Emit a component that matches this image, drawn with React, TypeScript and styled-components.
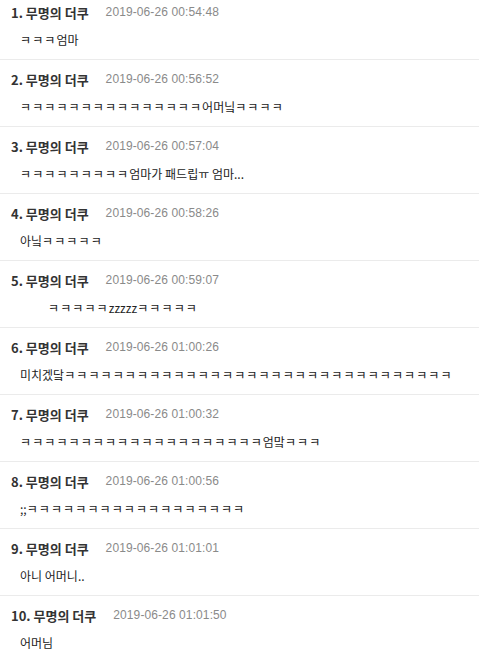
import React, { FunctionComponent } from 'react';
import styled, { createGlobalStyle } from 'styled-components';

const GlobalStyle = createGlobalStyle`
  html, body {
    margin: 0;
    padding: 0;
    background: #fff;
  }
  body {
    font-family: "Noto Sans CJK KR", "Liberation Sans", sans-serif;
    overflow: hidden;
  }
`;

const CommentList = styled.ul`
  list-style: none;
  margin: -7px 0 0 0;
  padding: 0;
  width: 479px;
`;

const CommentItem = styled.li`
  height: 66px;
  box-sizing: content-box;
  border-bottom: 1px solid #ebebeb;
  padding: 0 0 0 11px;
  display: flex;
  flex-direction: column;
`;

const CommentHeader = styled.div`
  display: flex;
  align-items: center;
  gap: 17px;
  height: 20px;
  margin-top: 9px;
`;

const Author = styled.span`
  font-family: "Noto Sans CJK KR", sans-serif;
  font-weight: 700;
  font-size: 13px;
  color: #333;
`;

const Timestamp = styled.span`
  font-family: "Liberation Sans", "DejaVu Sans", sans-serif;
  font-size: 12px;
  letter-spacing: 0.1px;
  color: #8a8a8a;
`;

const CommentBody = styled.p<{ $indent?: number }>`
  margin: 8px 0 0 0;
  padding-left: ${({ $indent }) => 9 + ($indent || 0)}px;
  height: 20px;
  line-height: 20px;
  font-family: "Noto Sans CJK KR", sans-serif;
  font-size: 12px;
  color: #222;
  white-space: nowrap;
`;

// the jamo run is drawn narrower than in the original font
const Laugh = styled.span`
  letter-spacing: 1.1px;
`;

const k = (n: number) => 'ㅋ'.repeat(n);

const renderText = (text: string) =>
  text.split(/(ㅋ+)/).map((part, i) =>
    part.startsWith('ㅋ') ? <Laugh key={i}>{part}</Laugh> : part
  );

interface IComment {
  time: string;
  text: string;
  indent?: number;
}

const comments: IComment[] = [
  { time: '2019-06-26 00:54:48', text: k(3) + '엄마' },
  { time: '2019-06-26 00:56:52', text: k(15) + '어머닠' + k(4) },
  { time: '2019-06-26 00:57:04', text: k(9) + '엄마가 패드립ㅠ 엄마...' },
  { time: '2019-06-26 00:58:26', text: '아닠' + k(5) },
  { time: '2019-06-26 00:59:07', text: k(5) + 'zzzzz' + k(5), indent: 28 },
  { time: '2019-06-26 01:00:26', text: '미치겠닼' + k(32) },
  { time: '2019-06-26 01:00:32', text: k(20) + '엄맠' + k(3) },
  { time: '2019-06-26 01:00:56', text: ';;' + k(18) },
  { time: '2019-06-26 01:01:01', text: '아니 어머니..' },
  { time: '2019-06-26 01:01:50', text: '어머님' },
];

const App: FunctionComponent = () => {
  return (
    <>
      <GlobalStyle />
      <CommentList>
        {comments.map((comment, idx) => (
          <CommentItem key={comment.time}>
            <CommentHeader>
              <Author>{idx + 1}. 무명의 더쿠</Author>
              <Timestamp>{comment.time}</Timestamp>
            </CommentHeader>
            <CommentBody $indent={comment.indent}>{renderText(comment.text)}</CommentBody>
          </CommentItem>
        ))}
      </CommentList>
    </>
  );
};

export default App;
